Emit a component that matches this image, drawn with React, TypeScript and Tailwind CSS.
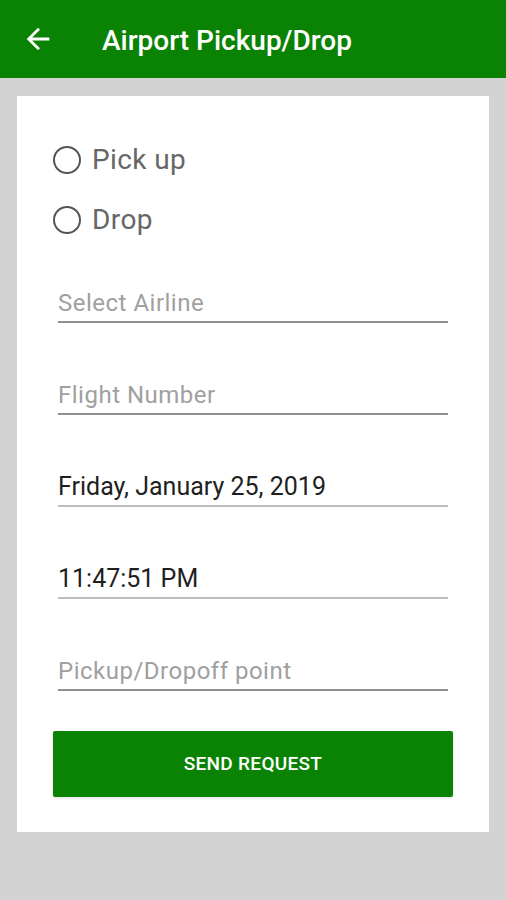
export default function App() {
  const fields = [
    { label: "Select Airline", value: false },
    { label: "Flight Number", value: false },
    { label: "Friday, January 25, 2019", value: true },
    { label: "11:47:51 PM", value: true },
    { label: "Pickup/Dropoff point", value: false },
  ]

  return (
    <div className="min-h-[900px] bg-[#d3d3d3] font-['Roboto',sans-serif]">
      {/* Toolbar */}
      <div className="h-[78px] bg-[#0a8203] flex items-center">
        <svg viewBox="0 0 24 24" className="w-[34px] h-[34px] ml-[21px] fill-white">
          <path d="M20 11H7.83l5.59-5.59L12 4l-8 8 8 8 1.41-1.41L7.83 13H20v-2z" />
        </svg>
        <h1 className="ml-[47px] mt-[3px] text-white text-[28px] font-medium">Airport Pickup/Drop</h1>
      </div>

      {/* Card */}
      <div className="mx-[17px] mt-[18px] bg-white px-[36px] pt-[34px] pb-[35px]">
        <div className="flex flex-col">
          {["Pick up", "Drop"].map((opt) => (
            <label key={opt} className="h-[60px] flex items-center">
              <span className="w-[28px] h-[28px] rounded-full border-2 border-[#555]" />
              <span className="ml-[11px] text-[28px] tracking-[0.4px] text-[#666]">{opt}</span>
            </label>
          ))}
        </div>

        <div className="mt-[38px] mx-[5px] flex flex-col gap-[57px]">
          {fields.map((f) => (
            <div
              key={f.label}
              className={`pb-[3px] border-b-2 ${f.value ? "border-[#bdbdbd]" : "border-[#8f8f8f]"}`}
            >
              <div
                className={`leading-[30px] ${
                  f.value ? "text-[25px] text-[#1f1f1f]" : "text-[24px] tracking-[0.5px] text-[#a0a0a0]"
                }`}
              >
                {f.label}
              </div>
            </div>
          ))}
        </div>

        <button className="mt-[40px] w-full h-[66px] bg-[#0a8203] rounded-[2px] shadow-sm text-white text-[19px] tracking-[0.3px] font-medium">
          SEND REQUEST
        </button>
      </div>
    </div>
  )
}
